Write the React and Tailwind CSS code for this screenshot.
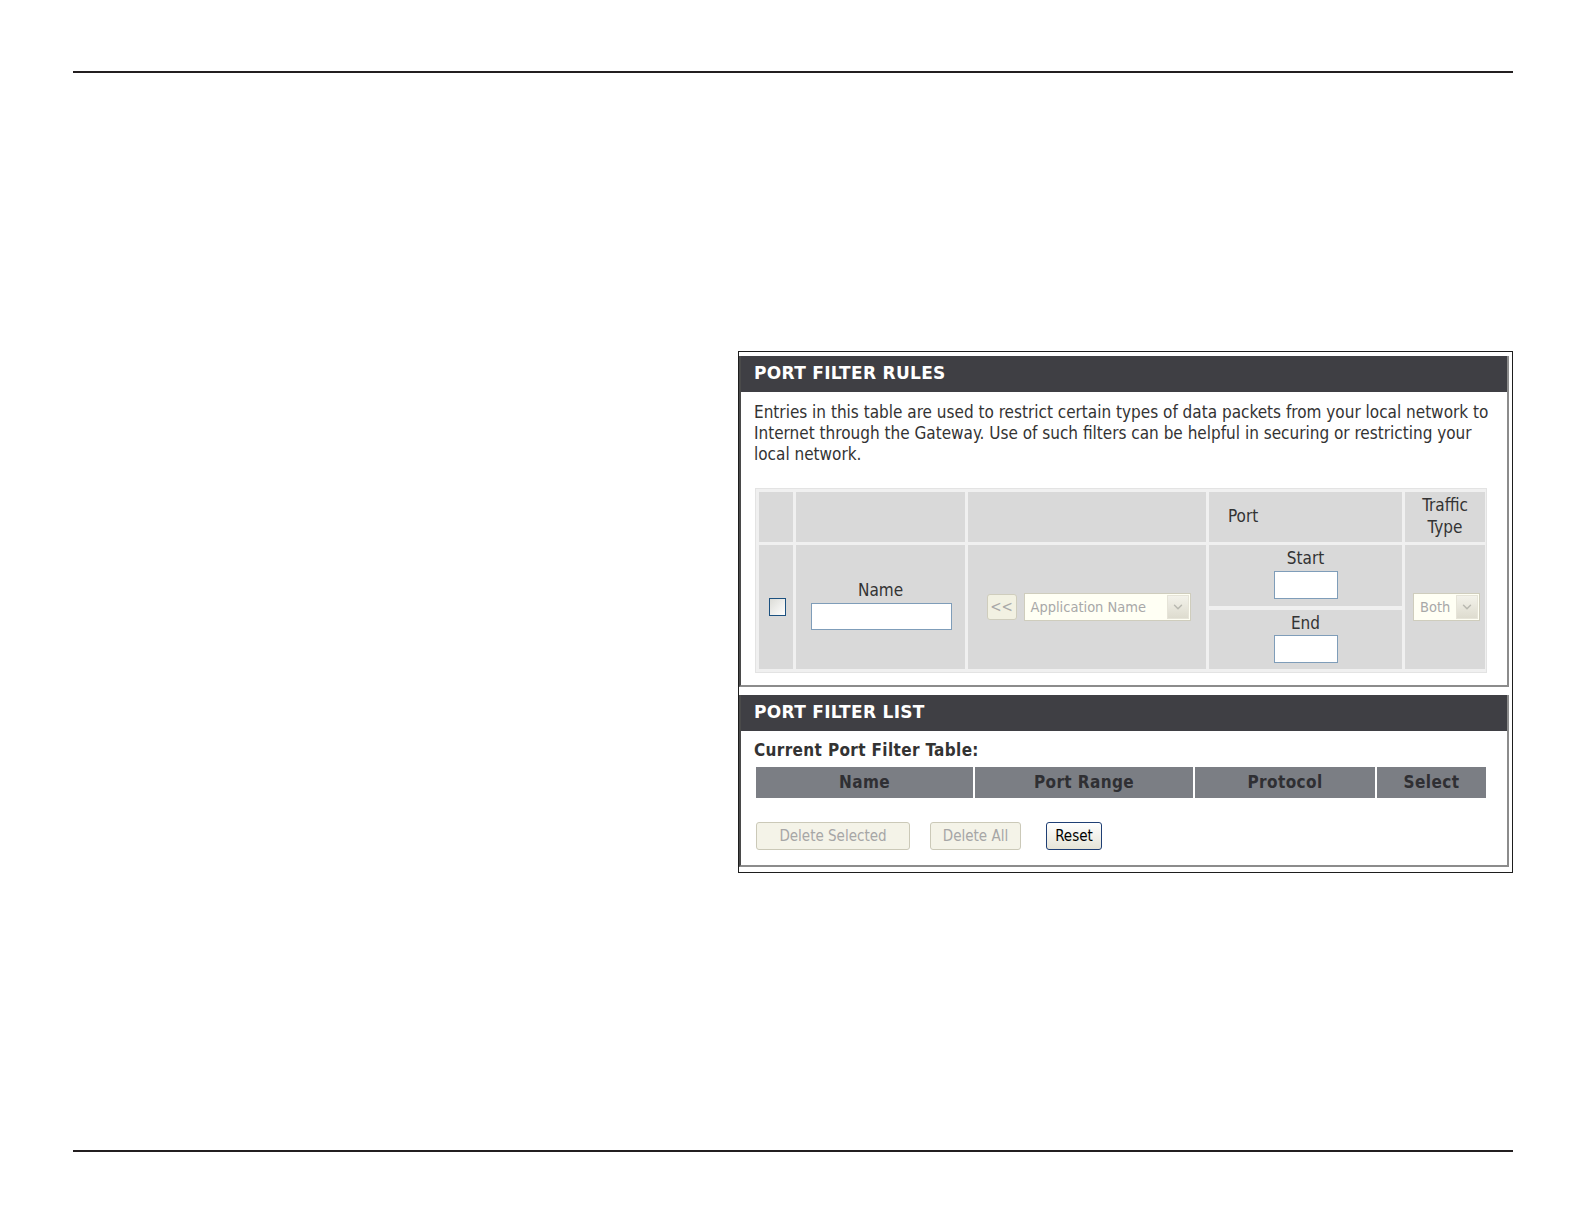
import { ChevronDown } from "lucide-react";

function SectionHeader({ title }) {
  return (
    <div className="h-[36px] bg-[#3f3f44] flex items-center px-[13px]">
      <span className="font-['DejaVu_Sans',sans-serif] font-bold text-[17px] text-white tracking-[0.3px]">
        {title}
      </span>
    </div>
  );
}

function FakeSelect({ label, width }) {
  return (
    <div
      className={`${width} h-[28px] border border-[#cfcdbd] bg-[#fffff4] flex items-center`}
    >
      <span className="flex-1 pl-[6px] text-[14.5px] text-[#a8a8a8] leading-none whitespace-nowrap">
        {label}
      </span>
      <span className="w-[22px] h-[24px] mr-[1px] bg-gradient-to-b from-[#f3f2ea] to-[#dedccf] border border-[#e6e4d8] flex items-center justify-center">
        <ChevronDown size={14} strokeWidth={2.5} className="text-[#b8b8b0]" />
      </span>
    </div>
  );
}

function TextBox({ className }) {
  return <div className={`bg-white border border-[#7f9db9] ${className}`} />;
}

function RulesTable() {
  return (
    <div className="ml-[1px] w-[732px] p-[3px] bg-[#f0f0f0] border border-[#e3e3e3] grid grid-cols-[34px_169px_238px_193px_80px] grid-rows-[50px_124px] gap-[3px]">
      {/* first row: column captions */}
      <div className="bg-[#d9d9d9]" />
      <div className="bg-[#d9d9d9]" />
      <div className="bg-[#d9d9d9]" />
      <div className="bg-[#d9d9d9] flex items-center pl-[19px]">Port</div>
      <div className="bg-[#d9d9d9] flex flex-col items-center justify-center leading-[22px] pb-[3px]">
        <span>Traffic</span>
        <span>Type</span>
      </div>

      {/* second row: editable fields */}
      <div className="bg-[#d9d9d9] flex items-center justify-center">
        <div className="ml-[2px] w-[17px] h-[18px] border border-[#1c5180] bg-gradient-to-br from-[#dcdcd7] to-white" />
      </div>
      <div className="bg-[#d9d9d9] flex flex-col items-center justify-center gap-[3px] pb-[4px]">
        <span className="leading-[20px]">Name</span>
        <TextBox className="w-[141px] h-[27px] ml-[1px]" />
      </div>
      <div className="bg-[#d9d9d9] flex items-center justify-center gap-[7px] pl-[3px]">
        <div className="w-[30px] h-[26px] rounded-[3px] border border-[#cfcdbd] bg-[#f2f1e2] flex items-center justify-center text-[15px] text-[#a8a8a8]">
          &lt;&lt;
        </div>
        <FakeSelect label="Application Name" width="w-[167px]" />
      </div>
      <div className="flex flex-col gap-[4px]">
        <div className="flex-1 bg-[#d9d9d9] flex flex-col items-center justify-center gap-[3px] pb-[4px]">
          <span className="leading-[20px]">Start</span>
          <TextBox className="w-[64px] h-[28px]" />
        </div>
        <div className="flex-1 bg-[#d9d9d9] flex flex-col items-center justify-center gap-[2px] pb-[3px]">
          <span className="leading-[20px]">End</span>
          <TextBox className="w-[64px] h-[28px]" />
        </div>
      </div>
      <div className="bg-[#d9d9d9] flex items-center justify-center pl-[3px]">
        <FakeSelect label="Both" width="w-[67px]" />
      </div>
    </div>
  );
}

function ListTable() {
  const cols = [
    { name: "Name", w: "w-[217px]" },
    { name: "Port Range", w: "w-[218px]" },
    { name: "Protocol", w: "w-[180px]" },
    { name: "Select", w: "w-[109px]" },
  ];
  return (
    <div className="ml-[2px] mt-[7px] flex gap-[2px]">
      {cols.map((c) => (
        <div
          key={c.name}
          className={`${c.w} h-[31px] bg-[#7b7e84] flex items-center justify-center font-bold text-[17px] tracking-[0.4px] text-[#2f2f33]`}
        >
          {c.name}
        </div>
      ))}
    </div>
  );
}

export default function App() {
  return (
    <div className="w-[1585px] h-[1225px] bg-white overflow-hidden font-['DejaVu_Sans_Condensed','DejaVu_Sans',sans-serif] text-[17px] text-[#333]">
      <div className="pt-[71px] pl-[73px]">
        <div className="w-[1440px] h-[2px] bg-[#231f20]" />
      </div>

      <div className="mt-[278px] ml-[738px] w-[775px] border border-[#1e1e1e] pt-[4px] pr-[3px] pb-[5px] flex flex-col gap-[8px]">
        {/* rules box */}
        <div className="border-l-2 border-r-2 border-b-2 border-l-[#4a4a4a] border-r-[#8c8c8c] border-b-[#8c8c8c]">
          <SectionHeader title="PORT FILTER RULES" />
          <div className="px-[13px] pt-[10px] pb-[12px]">
            <p className="leading-[21px] whitespace-nowrap">
              Entries in this table are used to restrict certain types of data packets from your local network to
              <br />
              Internet through the Gateway. Use of such filters can be helpful in securing or restricting your
              <br />
              local network.
            </p>
            <div className="mt-[23px]">
              <RulesTable />
            </div>
          </div>
        </div>

        {/* list box */}
        <div className="border-l-2 border-r-2 border-b-2 border-l-[#4a4a4a] border-r-[#8c8c8c] border-b-[#8c8c8c]">
          <SectionHeader title="PORT FILTER LIST" />
          <div className="px-[13px] pt-[9px] pb-[15px]">
            <div className="leading-[20px] font-bold tracking-[0.35px]">Current Port Filter Table:</div>
            <ListTable />
            <div className="mt-[24px] ml-[2px] flex items-center">
              <button className="w-[154px] h-[28px] rounded-[3px] border border-[#cbc9b8] bg-[#f4f3e8] text-[15px] text-[#a6a6a6]">
                Delete Selected
              </button>
              <button className="ml-[20px] w-[91px] h-[28px] rounded-[3px] border border-[#cbc9b8] bg-[#f4f3e8] text-[15px] text-[#a6a6a6]">
                Delete All
              </button>
              <button className="ml-[25px] w-[56px] h-[28px] rounded-[3px] border border-[#1f3f74] bg-gradient-to-b from-white to-[#e6e4d8] text-[15px] text-black">
                Reset
              </button>
            </div>
          </div>
        </div>
      </div>

      <div className="mt-[277px] pl-[73px]">
        <div className="w-[1440px] h-[2px] bg-[#231f20]" />
      </div>
    </div>
  );
}
